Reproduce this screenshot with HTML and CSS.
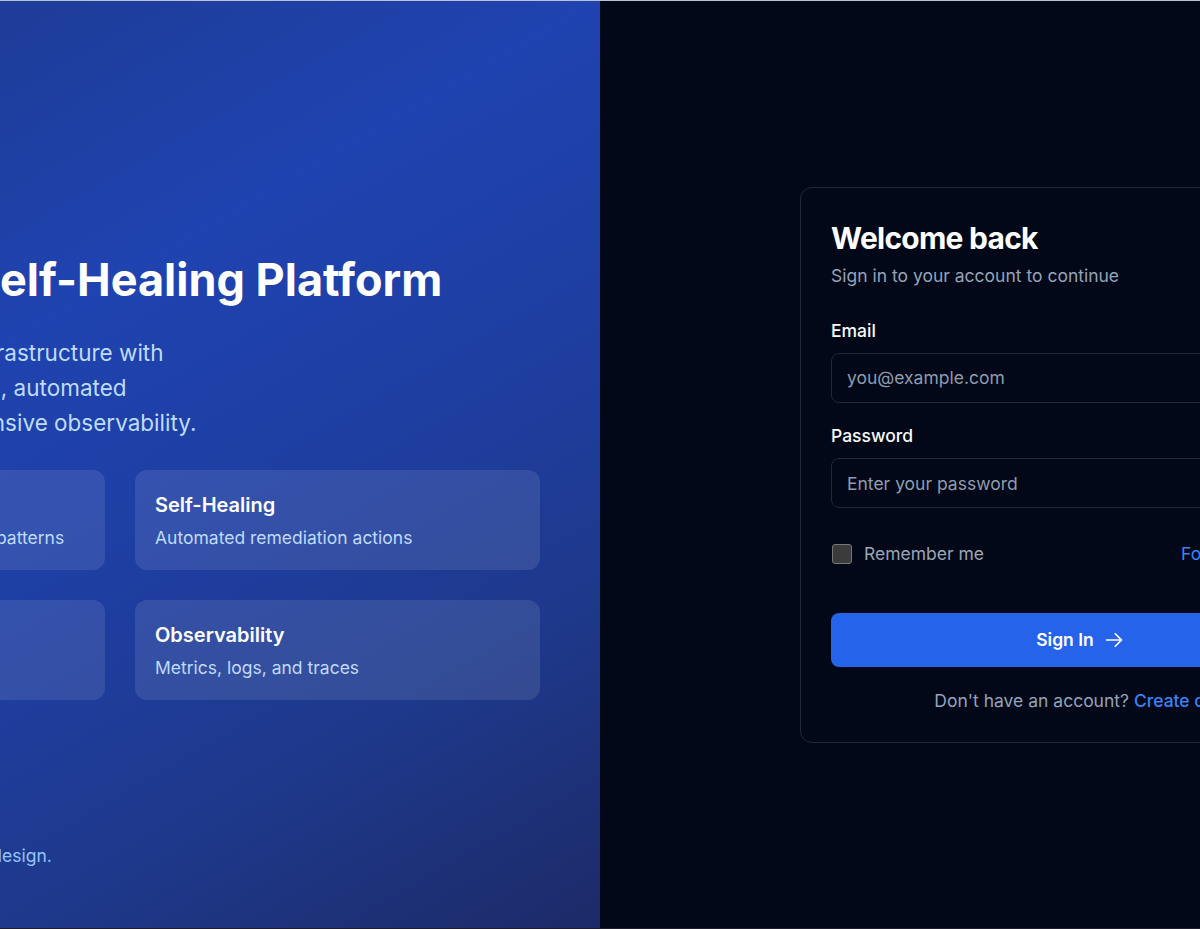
FILE: index.html
```html
<!DOCTYPE html>
<html lang="en">
<head>
<meta charset="utf-8">
<title>Sign in</title>
<link rel="stylesheet" href="styles.css">
</head>
<body>
<div class="page">
  <section class="brand">
    <div class="brand-inner">
      <div class="logo">
        <span class="logo-mark">
          <svg viewBox="0 0 24 24" width="28" height="28" fill="none" stroke="#fff" stroke-width="2" stroke-linecap="round" stroke-linejoin="round"><path d="M12 3l8 4.5v9L12 21l-8-4.5v-9z"/><path d="M12 8v8M8 10l4 2 4-2"/></svg>
        </span>
        <span class="logo-name">AIOps</span>
      </div>
      <div class="hero">
        <h1 class="hero-title">AI-Powered Self-Healing Platform</h1>
        <p class="hero-lead">Monitor and heal all your infrastructure with<br>AI-driven anomaly detection, automated<br>remediation, and comprehensive observability.</p>
        <div class="features">
          <div class="feature">
            <h3 class="feature-title">Anomaly Detection</h3>
            <p class="feature-desc">AI-powered detection of unusual patterns</p>
          </div>
          <div class="feature">
            <h3 class="feature-title">Self-Healing</h3>
            <p class="feature-desc">Automated remediation actions</p>
          </div>
          <div class="feature">
            <h3 class="feature-title">Smart Alerts</h3>
            <p class="feature-desc">Real-time incidents</p>
          </div>
          <div class="feature">
            <h3 class="feature-title">Observability</h3>
            <p class="feature-desc">Metrics, logs, and traces</p>
          </div>
        </div>
      </div>
      <p class="brand-foot">© 2024 AIOps platform. Secure by design.</p>
    </div>
  </section>

  <section class="auth">
    <div class="card">
      <h2 class="card-title">Welcome back</h2>
      <p class="card-sub">Sign in to your account to continue</p>

      <label class="field-label" for="email">Email</label>
      <input class="field-input" id="email" type="email" placeholder="you@example.com">

      <label class="field-label field-label-2" for="password">Password</label>
      <input class="field-input" id="password" type="password" placeholder="Enter your password">

      <div class="row">
        <label class="remember"><input class="check" type="checkbox"><span>Remember me</span></label>
        <a class="link" href="#">Forgot password?</a>
      </div>

      <button class="submit" type="button">Sign In
        <svg viewBox="0 0 24 24" width="20" height="20" fill="none" stroke="currentColor" stroke-width="2" stroke-linecap="round" stroke-linejoin="round"><path d="M13.5 4.5 21 12l-7.5 7.5M21 12H3"/></svg>
      </button>

      <p class="signup">Don't have an account? <a class="link link-strong" href="#">Create one</a></p>
    </div>
  </section>
</div>
</body>
</html>
```

FILE: styles.css
```css
html, body {
  margin: 0;
  height: 100%;
  overflow: hidden;
  background: #020817;
}

body {
  font-family: Inter, "Noto Sans", sans-serif;
  color: #f8fafc;
}

.page {
  display: flex;
  height: 929px;
  box-sizing: border-box;
  border-top: 1px solid #b9c1d6;
  border-bottom: 1px solid #1f1d2b;
}

/* ---------- left brand panel ---------- */
.brand {
  width: 600px;
  flex: none;
  overflow: hidden;
  display: flex;
  justify-content: flex-end;
  background: linear-gradient(150deg, #1e3c98 0%, #1f43b0 27%, #1e3ea2 50%, #1e398c 73%, #1d2a68 100%);
}

.brand-inner {
  width: 840px;
  flex: none;
  padding: 60px 60px 60px 0;
  display: flex;
  flex-direction: column;
  justify-content: space-between;
}

.logo {
  height: 50px;
  display: flex;
  align-items: center;
  gap: 12px;
}

.logo-mark {
  width: 50px;
  height: 50px;
  border-radius: 12px;
  background: rgba(255, 255, 255, 0.12);
  display: flex;
  align-items: center;
  justify-content: center;
}

.logo-name {
  font-size: 25px;
  font-weight: 700;
}

.hero-title {
  margin: 0 0 30px;
  font-size: 45px;
  line-height: 50px;
  font-weight: 700;
  color: #ffffff;
}

.hero-lead {
  margin: 0 0 30px;
  font-size: 22.5px;
  line-height: 35px;
  color: #bfdbfe;
}

.features {
  display: grid;
  grid-template-columns: 1fr 1fr;
  gap: 30px;
}

.feature {
  background: rgba(255, 255, 255, 0.1);
  border-radius: 12px;
  padding: 20px;
}

.feature-title {
  margin: 0 0 5px;
  font-size: 20px;
  line-height: 30px;
  font-weight: 600;
  color: #ffffff;
}

.feature-desc {
  margin: 0;
  font-size: 17.5px;
  line-height: 25px;
  color: #bfdbfe;
}

.brand-foot {
  margin: 0;
  font-size: 17.5px;
  line-height: 25px;
  color: #93c5fd;
}

/* ---------- right auth panel ---------- */
.auth {
  flex: 1;
  min-width: 0;
  overflow: hidden;
  display: flex;
  align-items: center;
  padding-left: 200px;
  background: #020817;
}

.card {
  width: 560px;
  flex: none;
  box-sizing: border-box;
  border: 1px solid #1e293b;
  border-radius: 12px;
  padding: 30px 30px 29px;
  display: flex;
  flex-direction: column;
}

.card-title {
  margin: 0;
  font-size: 30px;
  line-height: 40px;
  font-weight: 700;
  letter-spacing: -0.025em;
  color: #ffffff;
}

.card-sub {
  margin: 5px 0 0;
  font-size: 17.5px;
  line-height: 25px;
  color: #94a3b8;
}

.field-label {
  margin-top: 30px;
  font-size: 17.5px;
  line-height: 25px;
  font-weight: 500;
  color: #f8fafc;
}

.field-label-2 {
  margin-top: 20.5px;
}

.field-input {
  margin-top: 10px;
  height: 50px;
  box-sizing: border-box;
  border: 1px solid #1e293b;
  border-radius: 8px;
  background: #020817;
  padding: 0 15px;
  font-family: inherit;
  font-size: 17.5px;
  color: #f8fafc;
  outline: none;
}

.field-input::placeholder {
  color: #8f9bae;
}

.row {
  margin-top: 33px;
  height: 25px;
  display: flex;
  align-items: center;
  justify-content: space-between;
}

.remember {
  display: flex;
  align-items: center;
  gap: 12px;
  font-size: 17.5px;
  line-height: 25px;
  color: #9aa5b6;
}

.check {
  appearance: none;
  -webkit-appearance: none;
  margin: 0 0 0 1px;
  width: 20px;
  height: 20px;
  box-sizing: border-box;
  border: 1px solid #767676;
  border-radius: 3px;
  background: #3b3b3b;
}

.link {
  font-size: 17.5px;
  line-height: 25px;
  color: #3b82f6;
  text-decoration: none;
}

.link-strong {
  font-weight: 500;
}

.submit {
  margin-top: 46.5px;
  height: 54px;
  border: 0;
  border-radius: 8px;
  background: #2563eb;
  color: #ffffff;
  font-family: inherit;
  font-size: 17.5px;
  font-weight: 600;
  display: flex;
  align-items: center;
  justify-content: center;
  gap: 10px;
}

.signup {
  margin: 21px 0 0;
  text-align: center;
  font-size: 17.5px;
  line-height: 25px;
  color: #94a3b8;
}
```
